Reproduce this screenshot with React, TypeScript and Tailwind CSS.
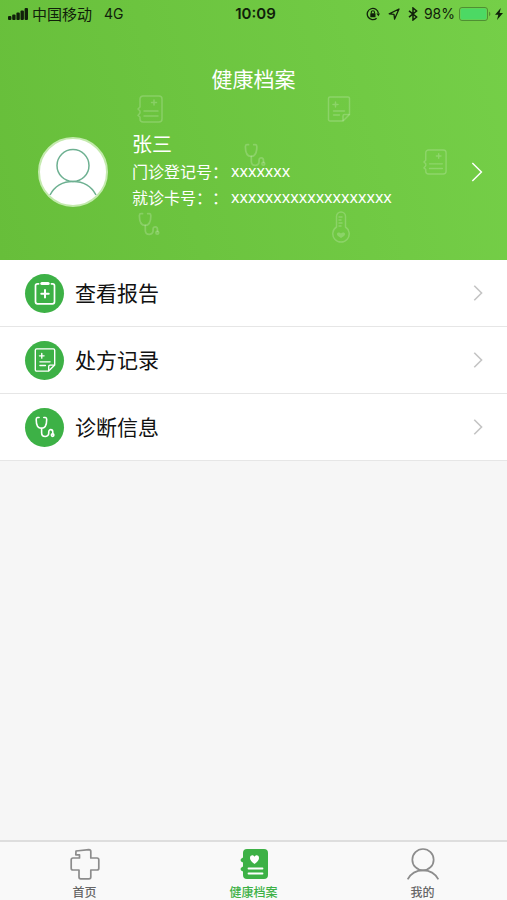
import React from 'react';
import clsx from 'clsx';

type IconProps = { className?: string };

function Signal() {
  return (
    <svg className="h-3 w-5" viewBox="0 0 20 12" fill="#10200a">
      <rect x="0" y="8" width="3.4" height="4" rx="1" />
      <rect x="4.2" y="6.4" width="3.4" height="5.6" rx="1" />
      <rect x="8.4" y="4.6" width="3.4" height="7.4" rx="1" />
      <rect x="12.5" y="2.4" width="3.4" height="9.6" rx="1" />
      <rect x="16.6" y="0" width="3.4" height="12" rx="1" />
    </svg>
  );
}

function RotationLock() {
  return (
    <svg className="h-3.5 w-3.5" viewBox="0 0 14 14" fill="none" stroke="#10200a" strokeWidth="1.3">
      <path d="M10.6 11.2A5.6 5.6 0 1 1 12.4 6.4" />
      <path d="M10.4 6.4h3.6l-1.6 2.8z" fill="#10200a" stroke="none" />
      <rect x="4.3" y="6.3" width="5.2" height="4" rx="0.5" fill="#10200a" stroke="none" />
      <path d="M5.3 6.6V5.3a1.6 1.6 0 0 1 3.2 0v1.3" strokeWidth="1.1" />
    </svg>
  );
}

function LocationArrow() {
  return (
    <svg className="h-3 w-3" viewBox="0 0 12 12" fill="none" stroke="#10200a" strokeWidth="1.3" strokeLinejoin="round">
      <path d="M11 1 1.2 5.8l4.8.5.6 4.8z" />
    </svg>
  );
}

function Bluetooth() {
  return (
    <svg className="h-3.5 w-2.5" viewBox="0 0 10 14" fill="none" stroke="#10200a" strokeWidth="1.5">
      <path d="M1 3.8 8.6 10 5 13V1l3.6 3L1 10.2" />
    </svg>
  );
}

function Battery() {
  return (
    <svg className="h-3.5 w-8" viewBox="0 0 32 14">
      <rect x="0.5" y="0.5" width="28" height="13" rx="2.5" fill="none" stroke="#4f8f33" />
      <rect x="1.5" y="1.5" width="26" height="11" rx="1.5" fill="#4cd964" />
      <path d="M30 4.8c1.8.5 1.8 3.9 0 4.4z" fill="#4f8f33" />
    </svg>
  );
}

function Bolt() {
  return (
    <svg className="h-3 w-2" viewBox="0 0 8 12" fill="#10200a">
      <path d="M5.8 0 0 6.8h3.3L2 12l6-7H4.6z" />
    </svg>
  );
}

function Chevron({ className }: IconProps) {
  return (
    <svg className={className} viewBox="0 0 10 18" fill="none" stroke="currentColor">
      <path d="M0.8 0.8 9 9l-8.2 8.2" />
    </svg>
  );
}

function Person({ className }: IconProps) {
  return (
    <svg className={className} viewBox="0 0 48 48" fill="none" stroke="currentColor">
      <circle cx="24" cy="17.5" r="16" />
      <path d="M1 47C6 37.5 13 33.5 24 33.5S42 37.5 47 47" />
    </svg>
  );
}

function Clipboard({ className }: IconProps) {
  return (
    <svg className={className} viewBox="0 0 24 24" fill="none" stroke="currentColor" strokeWidth="1.7" strokeLinecap="round">
      <path d="M5.6 2.8H4.5A2 2 0 0 0 2.5 4.8v16a2 2 0 0 0 2 2h15a2 2 0 0 0 2-2v-16a2 2 0 0 0-2-2h-1.1" />
      <path d="M8.8 2.6h6.4" strokeWidth="3" />
      <path d="M12 9v7.4M8.3 12.7h7.4" strokeWidth="2" />
    </svg>
  );
}

function Note({ className }: IconProps) {
  return (
    <svg className={className} viewBox="0 0 24 26" fill="none" stroke="currentColor" strokeWidth="1.5" strokeLinejoin="round" strokeLinecap="round">
      <path d="M3 1h18a1.5 1.5 0 0 1 1.5 1.5v16L16 25H3a1.5 1.5 0 0 1-1.5-1.5v-21A1.5 1.5 0 0 1 3 1z" />
      <path d="M16 24.5V20a1.5 1.5 0 0 1 1.5-1.5h4.5" />
      <path d="M8.5 6v5M6 8.5h5M6.5 15h11M6.5 19h6" />
    </svg>
  );
}

function Stethoscope({ className }: IconProps) {
  return (
    <svg className={className} viewBox="0 0 24 26" fill="none" stroke="currentColor" strokeWidth="1.9" strokeLinecap="round" strokeLinejoin="round">
      <path d="M5 1.8H3.2Q1.6 2 1.6 4c0 6 2 10.5 6.2 10.5S14 10 14 4q0-2-1.6-2.2h-1.8" />
      <path d="M8 14.5v5.3c0 6 8.4 5.7 8.4.6v-1.6c0-3.6 4.8-3.6 4.8.2v2" />
      <circle cx="21" cy="22.6" r="1.5" />
    </svg>
  );
}

function Notebook({ className }: IconProps) {
  return (
    <svg className={className} viewBox="0 0 26 28" fill="none" stroke="currentColor" strokeWidth="1.5" strokeLinejoin="round" strokeLinecap="round">
      <path d="M6 1h16a3 3 0 0 1 3 3v20a3 3 0 0 1-3 3H6a3 3 0 0 1-3-3v-2l-2-1.500L3 18v-2l-2-2 2-2V4a3 3 0 0 1 3-3z" />
      <path d="M17 5v5M14.5 7.5h5M7 16h14M7 21h14" />
    </svg>
  );
}

function Thermometer({ className }: IconProps) {
  return (
    <svg className={className} viewBox="0 0 18 32" fill="none" stroke="currentColor" strokeWidth="1.5" strokeLinecap="round">
      <path d="M4.5 16V5.5a4.5 4.5 0 0 1 9 0V16a8.2 8.2 0 1 1-9 0z" />
      <path d="M7 6h3M7 9h2M7 12h3M7 15h2" />
      <path d="M9 27c-3-1.8-4.5-3-4-4.5s3-1.5 4 0c1-1.5 3.5-1.5 4 0S12 25.2 9 27z" fill="currentColor" stroke="none" />
    </svg>
  );
}

function HomeCross({ className }: IconProps) {
  return (
    <svg className={className} viewBox="0 0 30 32" fill="none" stroke="currentColor" strokeWidth="1.7" strokeLinejoin="round">
      <path d="M6 3 18.8 1.6q2 0 2 2V10H27q1.800 0 1.800 1.800v8.400Q28.800 22 27 22h-6.200v7q0 1.800-1.800 1.800h-8.200Q9 30.800 9 29v-7H3q-1.800 0-1.800-1.800v-8.400Q1.200 10 3 10h6.500V6.800H5.800z" />
    </svg>
  );
}

function RecordBook({ className }: IconProps) {
  return (
    <svg className={className} viewBox="0 0 28 32">
      <path d="M7 1h17a4 4 0 0 1 4 4v22a4 4 0 0 1-4 4H7a4 4 0 0 1-4-4v-3.5Q.5 22.5.5 21T3 18.500v-4Q.5 13.500.5 12T3 9.500V5a4 4 0 0 1 4-4z" fill="currentColor" />
      <path d="M14.500 16c-3-2.300-4.700-4-4.500-6.300.3-2.900 3.500-3.200 4.500-.9 1-2.300 4.200-2 4.500.9.200 2.300-1.500 4-4.500 6.300z" fill="#fff" />
      <path d="M8.500 20.500h14M8.500 25.500h14" stroke="#fff" strokeWidth="1.8" strokeLinecap="round" />
    </svg>
  );
}

const records = [
  { label: '查看报告', Icon: Clipboard, size: 'h-6 w-6' },
  { label: '处方记录', Icon: Note, size: 'h-6 w-6' },
  { label: '诊断信息', Icon: Stethoscope, size: 'h-[22px] w-[22px]' },
];

const tabs = [
  { label: '首页', Icon: HomeCross, size: 'h-8 w-[30px]', active: false },
  { label: '健康档案', Icon: RecordBook, size: 'h-8 w-7', active: true },
  { label: '我的', Icon: Person, size: 'h-8 w-8 stroke-[2.6px]', active: false },
];

function StatusBar() {
  return (
    <div className="grid h-7 grid-cols-[1fr_auto_1fr] items-center pr-1 pl-2 text-[#10200a]">
      <div className="flex items-center gap-1 text-[15px] leading-5">
        <Signal />
        <span>中国移动</span>
        <span className="ml-2 font-['Inter'] text-sm">4G</span>
      </div>
      <span className="font-['Inter'] text-[15px] leading-5 font-semibold">10:09</span>
      <div className="flex items-center justify-end gap-1">
        <div className="mr-0.5 flex items-center gap-2">
          <RotationLock />
          <LocationArrow />
          <Bluetooth />
        </div>
        <span className="font-['Inter'] text-sm">98%</span>
        <Battery />
        <Bolt />
      </div>
    </div>
  );
}

function Backdrop() {
  return (
    <div className="pointer-events-none absolute inset-0 text-white/20" aria-hidden="true">
      <Notebook className="absolute top-[95px] left-[27%] h-7 w-[26px]" />
      <Note className="absolute top-[95px] left-[64.5%] h-7 w-6" />
      <Stethoscope className="absolute top-[143px] left-[48%] h-6 w-6" />
      <Notebook className="absolute top-[149px] left-[83.5%] h-[26px] w-6" />
      <Stethoscope className="absolute top-[212px] left-[27%] h-6 w-6" />
      <Thermometer className="absolute top-[211px] left-[65.5%] h-8 w-[18px]" />
    </div>
  );
}

export default function App() {
  return (
    <div className="flex min-h-screen flex-col bg-[#f6f6f6] font-['Noto_Sans_CJK_SC',sans-serif] text-[#111]">
      <header className="relative bg-linear-75 from-[#67be3a] to-[#75cf48] pb-[46px]">
        <Backdrop />
        <div className="relative">
          <StatusBar />
          <h1 className="pt-[34px] text-center text-[21px] leading-8 text-white">健康档案</h1>
          <button className="mt-8 flex w-full items-center pt-1 pr-6 pl-[38px] text-left text-white">
            <span className="flex h-[70px] w-[70px] shrink-0 items-center justify-center rounded-full border-2 border-[#c4eaae] bg-white">
              <Person className="h-12 w-12 stroke-[1.5px] text-[#6db091]" />
            </span>
            <span className="ml-6 flex grow flex-col pb-1 [text-spacing-trim:space-all]">
              <span className="text-xl leading-7">张三</span>
              <span className="flex gap-[3px] text-base leading-[26px]">
                <span>门诊登记号：</span>
                <span className="font-['Noto_Sans']">xxxxxxx</span>
              </span>
              <span className="flex gap-[3px] text-base leading-[26px]">
                <span>就诊卡号：：</span>
                <span className="font-['Noto_Sans']">xxxxxxxxxxxxxxxxxxx</span>
              </span>
            </span>
            <Chevron className="h-5 w-3 stroke-[1.3px]" />
          </button>
        </div>
      </header>

      <main className="grow">
        <ul className="bg-white">
          {records.map(({ label, Icon, size }) => (
            <li key={label} className="border-b border-[#e6e6e6]">
              <button className="flex h-[66px] w-full items-center pr-6 pl-[25px]">
                <span className="flex h-[39px] w-[39px] items-center justify-center rounded-full bg-[#3db146] text-white">
                  <Icon className={size} />
                </span>
                <span className="ml-[11px] grow pb-0.5 text-left text-[21px] leading-8">{label}</span>
                <Chevron className="h-4 w-2.5 stroke-[1.8px] text-[#c4c4c4]" />
              </button>
            </li>
          ))}
        </ul>
      </main>

      <nav className="grid grid-cols-3 border-t-2 border-[#dedede] bg-[#f9f9f9] pt-1.5">
        {tabs.map(({ label, Icon, size, active }) => (
          <button
            key={label}
            className={clsx('flex flex-col items-center gap-1', active ? 'text-[#3db146]' : 'text-[#8c8c8c]')}
          >
            <Icon className={size} />
            <span className={clsx('text-xs leading-4 font-medium', !active && 'text-[#666]')}>{label}</span>
          </button>
        ))}
      </nav>
    </div>
  );
}
